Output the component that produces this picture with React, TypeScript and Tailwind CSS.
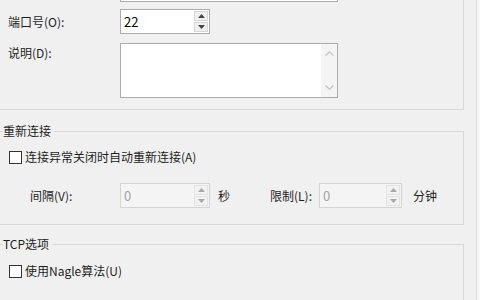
import React from "react";

const font = "font-['Noto_Sans_CJK_SC','Noto_Sans',sans-serif]";

function Arrow({ up, disabled }: { up?: boolean; disabled?: boolean }) {
  return (
    <svg width="7" height="4" viewBox="0 0 7 4">
      <path
        d={up ? "M0 4 L3.5 0 L7 4 Z" : "M0 0 L3.5 4 L7 0 Z"}
        fill={disabled ? "#a8a8a8" : "#444"}
      />
    </svg>
  );
}

function Spinner({
  value,
  width,
  disabled,
}: {
  value: string;
  width: string;
  disabled?: boolean;
}) {
  return (
    <div
      className={`flex h-[25px] ${width} border ${
        disabled ? "border-[#d4d4d4] bg-[#f4f4f4]" : "border-[#acacac] bg-white"
      }`}
    >
      <div
        className={`flex-1 flex items-center pl-[3px] text-[13px] ${
          disabled ? "text-[#a3a3a3]" : "text-black"
        }`}
      >
        {value}
      </div>
      <div className="w-[16px] flex flex-col gap-px p-px">
        <div
          className={`flex-1 flex items-center justify-center border ${
            disabled ? "border-[#e2e2e2] bg-[#f2f2f2]" : "border-[#d6d6d6] bg-[#f0f0f0]"
          }`}
        >
          <Arrow up disabled={disabled} />
        </div>
        <div
          className={`flex-1 flex items-center justify-center border ${
            disabled ? "border-[#e2e2e2] bg-[#f2f2f2]" : "border-[#d6d6d6] bg-[#f0f0f0]"
          }`}
        >
          <Arrow disabled={disabled} />
        </div>
      </div>
    </div>
  );
}

function Check({ label }: { label: string }) {
  return (
    <div className="flex items-center h-[16px] pl-[9px]">
      <div className="w-[13px] h-[13px] border border-[#333] bg-white" />
      <span className="ml-[3px] leading-[16px]">{label}</span>
    </div>
  );
}

function Chevron({ up }: { up?: boolean }) {
  return (
    <svg width="9" height="5" viewBox="0 0 9 5">
      <path
        d={up ? "M0.5 4.5 L4.5 0.8 L8.5 4.5" : "M0.5 0.5 L4.5 4.2 L8.5 0.5"}
        fill="none"
        stroke="#c2c2c2"
        strokeWidth="1.2"
      />
    </svg>
  );
}

export default function App() {
  return (
    <div
      className={`w-[480px] h-[300px] overflow-hidden flex bg-[#f0f0f0] text-[12px] text-[#1e1e1e] ${font}`}
    >
      <div className="w-[464px] flex flex-col">
        {/* connection group (top cut off) */}
        <div className="border-r border-b border-[#d9d9d9] pb-[11px]">
          <div className="ml-[120px] w-[218px] h-[23px] -mt-[21px] border border-[#acacac] bg-white" />

          <div className="flex items-center mt-[7px]">
            <span className="w-[120px] pl-[8px] leading-[16px]">端口号(O):</span>
            <Spinner value="22" width="w-[90px]" />
          </div>

          <div className="flex mt-[9px]">
            <span className="w-[120px] pl-[8px] mt-[2px] leading-[16px]">说明(D):</span>
            <div className="w-[218px] h-[55px] border border-[#acacac] bg-white flex justify-end">
              <div className="w-[16px] bg-[#f4f4f4] flex flex-col items-center justify-between py-[7px]">
                <Chevron up />
                <Chevron />
              </div>
            </div>
          </div>
        </div>

        {/* reconnect group */}
        <fieldset className="mt-[12px] border-t border-r border-b border-[#d9d9d9] pb-[16px]">
          <legend className="ml-[3px] pr-[3px] leading-[18px]">重新连接</legend>
          <div className="pt-[9px]">
            <Check label="连接异常关闭时自动重新连接(A)" />
            <div className="flex items-center mt-[18px] pl-[30px]">
              <span className="w-[90px] leading-[16px]">间隔(V):</span>
              <Spinner value="0" width="w-[90px]" disabled />
              <span className="ml-[8px] leading-[16px]">秒</span>
              <span className="ml-[40px] w-[49px] leading-[16px]">限制(L):</span>
              <Spinner value="0" width="w-[83px]" disabled />
              <span className="ml-[11px] leading-[16px]">分钟</span>
            </div>
          </div>
        </fieldset>

        {/* tcp group */}
        <fieldset className="mt-[10px] border-t border-r border-[#d9d9d9] flex-1">
          <legend className="ml-[3px] pr-[3px] leading-[18px]">TCP选项</legend>
          <div className="pt-[10px]">
            <Check label="使用Nagle算法(U)" />
          </div>
        </fieldset>
      </div>

      <div className="w-[12px]" />
      <div className="flex-1 border-l border-[#dcdcdc] bg-[#f6f6f6]" />
    </div>
  );
}
